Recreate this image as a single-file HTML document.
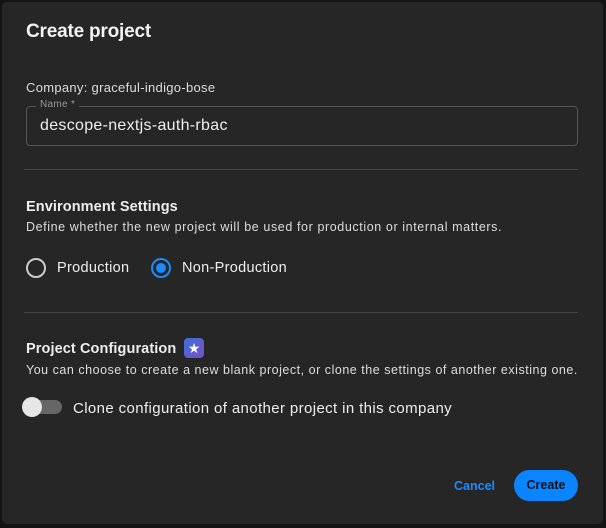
<!DOCTYPE html><html><head><style>
body{margin:0;width:606px;height:528px;background:#141414;font-family:"Liberation Sans",sans-serif;color:#eee;overflow:hidden;position:relative}
.d{position:absolute;left:2px;top:2px;width:601px;height:522px;background:#262626;border-radius:5px}
.a{position:absolute;white-space:nowrap;letter-spacing:0.3px}
.hr{position:absolute;left:24px;width:554px;height:1px;background:#444}
</style></head><body><div class="d"></div>
<div class="a" style="left:26px;top:21px;font-size:19px;font-weight:bold;color:#f2f2f2;letter-spacing:-0.2px">Create project</div>
<div class="a" style="left:26px;top:80px;font-size:13px;color:#ddd">Company: graceful-indigo-bose</div>
<div style="position:absolute;left:26px;top:106px;width:550px;height:38px;border:1px solid #555;border-radius:4px"></div>
<div class="a" style="left:36px;top:99px;font-size:10px;color:#999;background:#262626;padding:0 4px">Name *</div>
<div class="a" style="left:40px;top:117px;font-size:16px;color:#eee">descope-nextjs-auth-rbac</div>
<div class="hr" style="top:169px"></div>
<div class="a" style="left:26px;top:199px;font-size:14.5px;font-weight:bold;color:#eee;letter-spacing:0.1px">Environment Settings</div>
<div class="a" style="left:26px;top:220px;font-size:12.5px;color:#ddd;letter-spacing:0.6px">Define whether the new project will be used for production or internal matters.</div>
<div style="position:absolute;left:26px;top:258px;width:16px;height:16px;border:2px solid #ccc;border-radius:50%"></div>
<div class="a" style="left:57px;top:260px;font-size:14.5px;color:#eee">Production</div>
<div style="position:absolute;left:151px;top:258px;width:16px;height:16px;border:2px solid #1a8cff;border-radius:50%"></div>
<div style="position:absolute;left:156px;top:263px;width:10px;height:10px;background:#1a8cff;border-radius:50%"></div>
<div class="a" style="left:182px;top:260px;font-size:14.5px;color:#eee">Non-Production</div>
<div class="hr" style="top:312px"></div>
<div class="a" style="left:26px;top:341px;font-size:14.5px;font-weight:bold;color:#eee;letter-spacing:0.1px">Project Configuration</div>
<div style="position:absolute;left:184px;top:338px;width:20px;height:20px;border-radius:4px;background:linear-gradient(135deg,#3a6fd8,#7a4fc8);color:#fff;font-size:14px;text-align:center;line-height:20px">★</div>
<div class="a" style="left:26px;top:363px;font-size:12.5px;color:#ddd;letter-spacing:0.52px">You can choose to create a new blank project, or clone the settings of another existing one.</div>
<div style="position:absolute;left:26px;top:400px;width:36px;height:14px;background:#666;border-radius:7px"></div>
<div style="position:absolute;left:22px;top:397px;width:20px;height:20px;background:#e6e6e6;border-radius:50%"></div>
<div class="a" style="left:73px;top:400px;font-size:15px;color:#eee;letter-spacing:0.38px">Clone configuration of another project in this company</div>
<div class="a" style="left:454px;top:479px;font-size:12.5px;font-weight:bold;color:#1a8cff;letter-spacing:0">Cancel</div>
<div style="position:absolute;left:514px;top:470px;width:64px;height:31px;background:#0a84ff;border-radius:16px;color:#111;font-size:12.5px;font-weight:bold;text-align:center;line-height:31px">Create</div>
</body></html>
